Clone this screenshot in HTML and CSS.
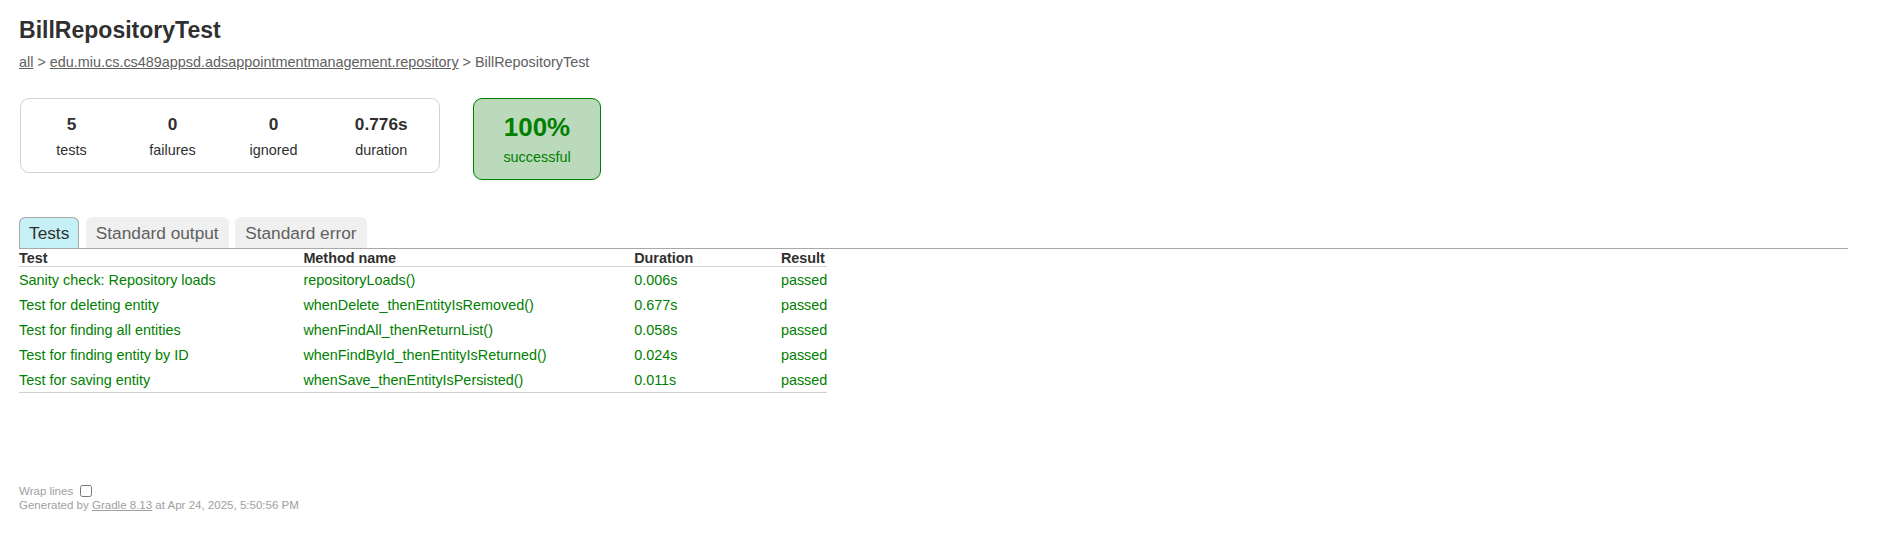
FILE: index.html
```html
<!DOCTYPE html>
<html>
<head>
<meta charset="utf-8">
<title>Test results - BillRepositoryTest</title>
<link rel="stylesheet" href="styles.css">
</head>
<body>
<div class="content">
  <h1 class="title">BillRepositoryTest</h1>
  <div class="breadcrumbs">
    <a href="#">all</a> &gt;
    <a href="#">edu.miu.cs.cs489appsd.adsappointmentmanagement.repository</a> &gt; BillRepositoryTest
  </div>

  <div class="summary">
    <table class="summary-table">
      <tr>
        <td>
          <div class="summary-group">
            <table class="summary-table">
              <tr>
                <td><div class="info-box"><div class="counter">5</div><p class="label">tests</p></div></td>
                <td><div class="info-box"><div class="counter">0</div><p class="label">failures</p></div></td>
                <td><div class="info-box"><div class="counter">0</div><p class="label">ignored</p></div></td>
                <td><div class="info-box info-duration"><div class="counter">0.776s</div><p class="label">duration</p></div></td>
              </tr>
            </table>
          </div>
        </td>
        <td>
          <div class="info-box success-rate"><div class="percent">100%</div><p class="label">successful</p></div>
        </td>
      </tr>
    </table>
  </div>

  <div class="tabs">
    <ul class="tab-links">
      <li class="tab-link selected"><a href="#">Tests</a></li>
      <li class="tab-link"><a href="#">Standard output</a></li>
      <li class="tab-link"><a href="#">Standard error</a></li>
    </ul>
    <table class="results">
      <thead>
        <tr>
          <th>Test</th>
          <th>Method name</th>
          <th>Duration</th>
          <th>Result</th>
        </tr>
      </thead>
      <tbody>
        <tr class="success"><td>Sanity check: Repository loads</td><td>repositoryLoads()</td><td>0.006s</td><td>passed</td></tr>
        <tr class="success"><td>Test for deleting entity</td><td>whenDelete_thenEntityIsRemoved()</td><td>0.677s</td><td>passed</td></tr>
        <tr class="success"><td>Test for finding all entities</td><td>whenFindAll_thenReturnList()</td><td>0.058s</td><td>passed</td></tr>
        <tr class="success"><td>Test for finding entity by ID</td><td>whenFindById_thenEntityIsReturned()</td><td>0.024s</td><td>passed</td></tr>
        <tr class="success"><td>Test for saving entity</td><td>whenSave_thenEntityIsPersisted()</td><td>0.011s</td><td>passed</td></tr>
      </tbody>
    </table>
  </div>

  <div class="footer">
    <div class="wrap-row">
      <label class="wrap-label" for="wrap-toggle">Wrap lines</label>
      <input class="wrap-toggle" id="wrap-toggle" type="checkbox">
    </div>
    <div class="generated">Generated by <a href="#">Gradle 8.13</a> at Apr 24, 2025, 5:50:56 PM</div>
  </div>
</div>
</body>
</html>
```

FILE: styles.css
```css
html, body {
  margin: 0;
  padding: 0;
  background: #ffffff;
}

body {
  font-family: "Liberation Sans", Arial, sans-serif;
  font-size: 14.4px;
  color: #303030;
}

a, a:visited {
  color: #303030;
}

.content {
  padding: 17px 32px 20px 19px;
}

.title {
  font-size: 23.04px;
  font-weight: bold;
  margin: 0 0 10px 0;
  white-space: nowrap;
  line-height: normal;
}

.breadcrumbs, .breadcrumbs a {
  color: #606060;
}

.summary {
  margin-top: 27px;
  margin-bottom: 36px;
}

.summary-table {
  border-collapse: collapse;
}

.summary-table td {
  vertical-align: top;
  padding: 1px;
}

.summary-group {
  border: 1px solid #d0d0d0;
  border-radius: 9px;
}

.info-box {
  width: 99px;
  padding: 13.5px 0;
  text-align: center;
}

.info-duration {
  width: 112.5px;
}

.label {
  margin: 0;
}

.counter {
  font-size: 17.28px;
  font-weight: bold;
  margin-bottom: 7.2px;
}

.percent {
  font-size: 25.92px;
  font-weight: bold;
  margin-bottom: 7.2px;
}

.success-rate {
  width: 126px;
  margin-left: 31.5px;
  padding: 14px 0;
  border: 1px solid #008000;
  border-radius: 9px;
  background-color: #bbd9bb;
  color: #008000;
}

.tab-links {
  display: flex;
  gap: 6.5px;
  margin: 0;
  padding: 0;
  list-style: none;
  border-bottom: 1px solid #a8a8a8;
}

.tab-link {
  padding: 4.5px 9px;
  border: 1px solid #f0f0f0;
  border-bottom: 0;
  border-radius: 6.3px 6.3px 0 0;
  background-color: #f0f0f0;
}

.tab-link a {
  display: block;
  font-size: 17.28px;
  text-decoration: none;
  color: #606060;
}

.tab-link.selected {
  background-color: #c5f0f5;
  border-color: #a8a8a8;
}

.tab-link.selected a {
  color: #303030;
}

.results {
  border-collapse: collapse;
  border-bottom: 1px solid #d0d0d0;
}

.results th {
  text-align: left;
  white-space: nowrap;
  padding: 0.5px 0 0.5px 87.6px;
  border-bottom: 1px solid #d0d0d0;
  font-weight: bold;
}

.results td {
  white-space: nowrap;
  padding: 4.5px 0 4.5px 87.6px;
}

.results th:first-child,
.results td:first-child {
  padding-left: 0;
}

.success td {
  color: #008000;
}

.footer {
  margin-top: 89px;
  font-size: 11.52px;
  white-space: nowrap;
  color: #a0a0a0;
}

.footer a, .footer a:visited {
  color: #a0a0a0;
}

.wrap-label {
  vertical-align: middle;
}

.wrap-toggle {
  vertical-align: middle;
  width: 11.7px;
  height: 11.7px;
  margin: 2.7px 2.7px 2.7px 3.6px;
}
```
